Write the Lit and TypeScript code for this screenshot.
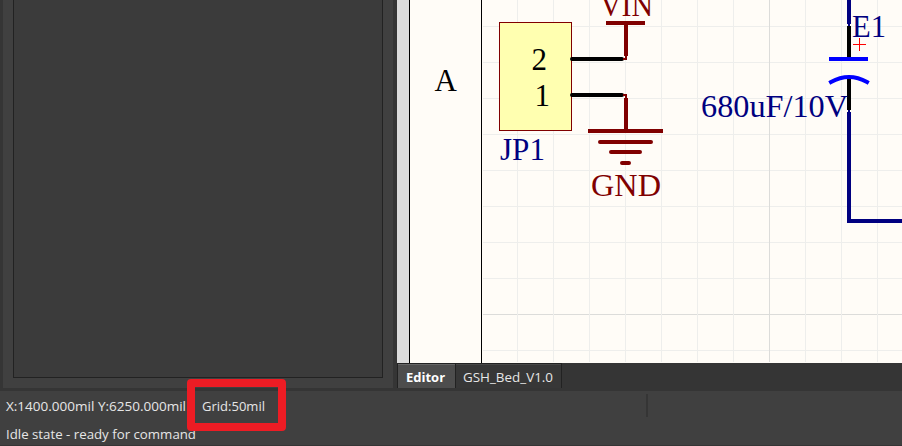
import { LitElement, html, svg, css } from "lit";
import { customElement } from "lit/decorators.js";

const COLS = [517, 553, 589, 625, 661, 697, 733, 769, 805, 841, 877];
const ROWS = [26, 62, 98, 134, 170, 206, 242, 278, 314, 350];

@customElement("schematic-sheet")
class SchematicSheet extends LitElement {
  static styles = css`
    :host { display: block; width: 505px; height: 363px; }
    svg { display: block; }
    text { font-family: "Liberation Serif", serif; font-size: 31px; }
    .minor { fill: #eeeeec; }
    .major { fill: #dcdcda; }
    .net { stroke: #800000; fill: none; }
    .netText { fill: #800000; }
    .pin { stroke: #000; stroke-width: 4; fill: none; }
    .wire { stroke: #000080; stroke-width: 4; fill: none; }
    .joint { stroke: #000080; stroke-width: 2; }
    .ref { fill: #000080; }
    .part { stroke: #00f; stroke-width: 4; fill: none; stroke-linecap: square; }
    .origin { fill: none; stroke: #f00; stroke-width: 1; }
  `;
  render() {
    return html`<svg width="505" height="363" viewBox="397 0 505 363">
      <rect x="397" width="505" height="363" fill="#fffcf7"></rect>
      <rect x="397" width="12" height="363" fill="#dcdcdc"></rect>
      <g shape-rendering="crispEdges">
        ${ROWS.map((y) => svg`<rect class=${y === 314 ? "major" : "minor"} x="483" y=${y} width="419" height="1"></rect>`)}
        ${COLS.map((x) => svg`<rect class=${x === 769 ? "major" : "minor"} x=${x} y="0" width="1" height="362"></rect>`)}
        <rect x="409" width="1" height="363"></rect>
        <rect x="481" width="1" height="363"></rect>
      </g>
      <text x="434.5" y="91">A</text>
      <rect x="499.5" y="22.5" width="72" height="108" fill="#ffffb0" stroke="#800000"></rect>
      <text x="531.5" y="70">2</text>
      <text x="534.5" y="106">1</text>
      <text class="ref" x="500" y="160" textLength="45" lengthAdjust="spacingAndGlyphs">JP1</text>
      <g class="net">
        <path stroke-width="4" d="M606 23H645M626 23V56M626 98V130M588 131H663"></path>
        <path stroke-width="4" stroke-linecap="round" d="M600 142H651M611 152H640M622 163H629"></path>
      </g>
      <path class="pin" stroke-linecap="round" d="M572 59H622M572 95H622"></path>
      <path class="net" d="M623 59H627M626 56V60M623 95H627M626 94V98" stroke-width="2"></path>
      <path d="M624 57h1v1h-1zM627 57h1v1h-1zM627 60h1v1h-1zM624 93h1v1h-1zM627 93h1v1h-1zM627 96h1v1h-1z" fill="#fffcf7"></path>
      <text class="netText" x="600" y="16" textLength="53" lengthAdjust="spacingAndGlyphs">VIN</text>
      <text class="netText" x="591" y="196" textLength="70" lengthAdjust="spacingAndGlyphs">GND</text>
      <path class="wire" d="M849 0V24M849 112V221M847 221H902"></path>
      <path class="joint" d="M849 24V26M849 110V112"></path>
      <path class="pin" d="M849 26V59M849 77V110"></path>
      <path class="part" d="M831 59H866M831 82Q849 72 867 82"></path>
      <path class="origin" d="M853 44.500H866M859.500 38V51"></path>
      <text class="ref" x="852" y="37" textLength="34" lengthAdjust="spacingAndGlyphs">E1</text>
      <text class="ref" x="701" y="117" textLength="147" lengthAdjust="spacingAndGlyphs">680uF/10V</text>
    </svg>`;
  }
}

@customElement("app-root")
class AppRoot extends LitElement {
  static styles = css`
    :host {
      display: flex; flex-direction: column; width: 902px; height: 446px; overflow: hidden;
      background: #353535; color: #e6e6e6; font: 13px/18px "Open Sans", "Noto Sans", sans-serif;
    }
    * { box-sizing: border-box; }
    .work { display: flex; height: 388px; padding-left: 3px; }
    .panel { width: 390px; background: #404040; padding: 0 10px 10px; margin-right: 4px; }
    .panelBody { height: 378px; border: 1px solid #222; border-top: 0; background: #3b3b3b; }
    .tabs { display: flex; height: 25px; }
    .tab { border: 1px solid #222; border-width: 1px 0 0 1px; box-shadow: inset 0 1px #484848; padding-top: 4px; white-space: nowrap; }
    .active { width: 58px; padding-left: 8px; background: #4d4d4d; color: #fff; font-weight: 700; box-shadow: inset 0 1px #666; }
    .file { width: 107px; padding-left: 7px; background: #373737; border-right-width: 1px; }
    .status { position: relative; height: 54px; margin-top: 3px; background: #404040; }
    .row { display: flex; height: 28px; align-items: center; padding: 1px 0 0 6px; white-space: nowrap; }
    .coords { width: 196px; }
    .divider { width: 2px; height: 23px; margin-left: auto; background: #353535; }
    .field { display: flex; align-items: center; width: 446px; height: 23px; }
    .mark { position: absolute; left: 187px; top: -12px; width: 99px; height: 52px; border: 8px solid #ed1c24; border-radius: 4px; }
    svg text { fill: #e6e6e6; font: 13px "Open Sans", "Noto Sans", sans-serif; }
    svg { display: block; overflow: visible; }
  `;
  label(value: string, width: number) {
    return html`<svg width=${width} height="18"><text y="14" textLength=${width} lengthAdjust="spacingAndGlyphs">${value}</text></svg>`;
  }
  render() {
    return html`
      <main class="work">
        <section class="panel"><div class="panelBody"></div></section>
        <section>
          <schematic-sheet></schematic-sheet>
          <nav class="tabs">
            <div class="tab active">Editor</div>
            <div class="tab file">${this.label("GSH_Bed_V1.0", 90)}</div>
          </nav>
        </section>
      </main>
      <footer class="status">
        <div class="row">
          <div class="coords">${this.label("X:1400.000mil Y:6250.000mil", 180)}</div>
          <div class="field">${this.label("Grid:50mil", 63)}<span class="divider"></span></div>
        </div>
        <div class="row">${this.label("Idle state - ready for command", 190)}</div>
        <div class="mark"></div>
      </footer>`;
  }
}
